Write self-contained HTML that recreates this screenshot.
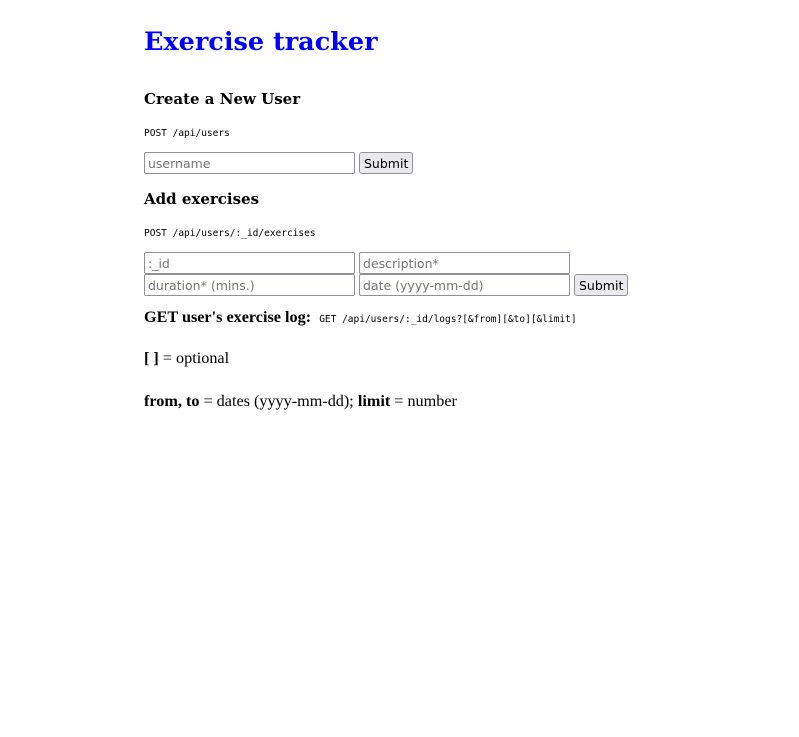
<!DOCTYPE html>
<html><head><meta charset="utf-8"><style>
body{margin:0;background:#fff;width:799px;height:737px;position:relative;overflow:hidden}
.a{position:absolute;left:144px;line-height:1;white-space:nowrap}
h1,h3{margin:0;font-family:"DejaVu Serif",serif;font-weight:bold}
h1{font-size:25.5px;color:#0000ff}
h3{font-size:15px;color:#000}
code{font-family:"DejaVu Sans Mono",monospace;font-size:9.5px}
.t{font-family:"Liberation Serif",serif;font-size:16.2px}
input,button{position:absolute;box-sizing:border-box;height:22px;font-family:"DejaVu Sans",sans-serif;font-size:12.5px;margin:0}
input{width:211px;border:1px solid #8f8f9d;border-radius:2px;padding:0 3px;background:#fff}
input::placeholder{color:#757575}
button{border:1px solid #8f8f9d;border-radius:3px;background:#e9e9ed;color:#000;padding:0 4px}
</style></head><body>
<div class="a" style="top:30px"><h1>Exercise tracker</h1></div>
<div class="a" style="top:92px"><h3>Create a New User</h3></div>
<div class="a" style="top:124px"><code>POST /api/users</code></div>
<input style="left:144px;top:152px" placeholder="username">
<button style="left:359px;top:152px;width:54px">Submit</button>
<div class="a" style="top:192px"><h3>Add exercises</h3></div>
<div class="a" style="top:224px"><code>POST /api/users/:_id/exercises</code></div>
<input style="left:144px;top:252px" placeholder=":_id">
<input style="left:359px;top:252px" placeholder="description*">
<input style="left:144px;top:274px" placeholder="duration* (mins.)">
<input style="left:359px;top:274px" placeholder="date (yyyy-mm-dd)">
<button style="left:574px;top:274px;width:54px">Submit</button>
<div class="a t" style="top:309px"><b>GET user's exercise log:</b>&nbsp; <code>GET /api/users/:_id/logs?[&amp;from][&amp;to][&amp;limit]</code></div>
<div class="a t" style="top:350px"><b>[ ]</b> = optional</div>
<div class="a t" style="top:393px"><b>from, to</b> = dates (yyyy-mm-dd); <b>limit</b> = number</div>
</body></html>
